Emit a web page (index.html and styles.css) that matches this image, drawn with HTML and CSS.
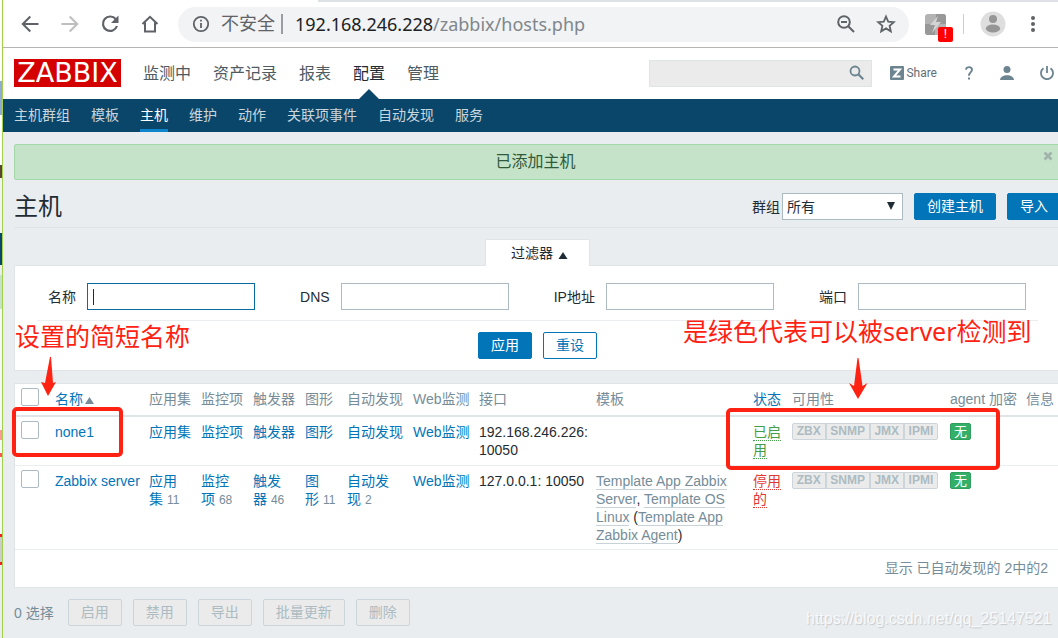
FILE: index.html
```html
<!DOCTYPE html>
<html lang="zh-CN">
<head>
<meta charset="utf-8">
<title>Zabbix - 主机</title>
<link rel="stylesheet" href="styles.css">
</head>
<body>
<div class="backdrop"></div>
<div class="window">
  <div class="toolbar">
    <button class="tool" aria-label="后退"><svg width="20" height="20" viewBox="0 0 20 20"><path d="M18.500 10H3M10.300 2.500 2.800 10l7.500 7.500" fill="none" stroke="#5f6368" stroke-width="2"/></svg></button>
    <button class="tool" aria-label="前进"><svg width="20" height="20" viewBox="0 0 20 20"><path d="M1.500 10H17M9.700 2.500 17.200 10l-7.500 7.500" fill="none" stroke="#bcbec0" stroke-width="2"/></svg></button>
    <button class="tool" aria-label="刷新"><svg width="20" height="20" viewBox="0 0 20 20"><path d="M15.800 5.200A7.200 7.200 0 1 0 17 12" fill="none" stroke="#5f6368" stroke-width="2.200"/><path d="M18.500 1.500v7.500H11z" fill="#5f6368"/></svg></button>
    <button class="tool" aria-label="主页"><svg width="20" height="20" viewBox="0 0 20 20"><path d="M2.500 10 10 2.800 17.500 10M5 8.500v9h10v-9" fill="none" stroke="#5f6368" stroke-width="2"/></svg></button>
    <div class="address">
      <svg width="18" height="18" viewBox="0 0 18 18"><circle cx="9" cy="9" r="7.200" fill="none" stroke="#5f6368" stroke-width="1.800"/><path d="M9 8v5M9 4.800v1.800" stroke="#5f6368" stroke-width="1.800"/></svg>
      <span class="insecure">不安全</span>
      <span class="address-rule"></span>
      <span class="url">192.168.246.228<span class="url-path">/zabbix/hosts.php</span></span>
      <button class="tool" aria-label="缩放"><svg width="20" height="20" viewBox="0 0 20 20"><circle cx="8" cy="8" r="5.800" fill="none" stroke="#5f6368" stroke-width="2"/><path d="M5 8h6M12.200 12.200l5.800 5.800" stroke="#5f6368" stroke-width="2" fill="none"/></svg></button>
      <button class="tool" aria-label="收藏"><svg width="20" height="20" viewBox="0 0 20 20"><path d="M10 2.500l2.200 5.100 5.600.5-4.200 3.700 1.200 5.500-4.800-2.900-4.800 2.900 1.200-5.500L2.200 8.100l5.600-.5z" fill="none" stroke="#5f6368" stroke-width="1.800"/></svg></button>
    </div>
    <button class="extension" aria-label="扩展程序">
      <svg width="21" height="21" viewBox="0 0 21 21"><rect width="21" height="21" rx="3" fill="#b3b3b3"/><path d="M0 10h10v11H3a3 3 0 0 1-3-3zM11 0h7a3 3 0 0 1 3 3v7H11z" fill="#989898"/><path d="M13 2 5 11h5l-3 8 9-11h-5z" fill="#d4d4d4"/></svg>
      <span class="alert-badge">!</span>
    </button>
    <span class="tool-rule"></span>
    <button class="profile" aria-label="用户"><svg width="26" height="26" viewBox="0 0 26 26"><circle cx="13" cy="13" r="12.500" fill="#dedede"/><circle cx="13" cy="8" r="4" fill="#969696"/><ellipse cx="13" cy="17.500" rx="7.200" ry="4" fill="#969696"/></svg></button>
    <button class="more" aria-label="更多"><svg width="6" height="18" viewBox="0 0 6 18"><circle cx="3" cy="3" r="2" fill="#5f6368"/><circle cx="3" cy="9" r="2" fill="#5f6368"/><circle cx="3" cy="15" r="2" fill="#5f6368"/></svg></button>
  </div>

  <header class="header">
    <a class="logo" href="#">ZABBIX</a>
    <nav class="menu">
      <a href="#">监测中</a><a href="#">资产记录</a><a href="#">报表</a><a class="current" href="#">配置</a><a href="#">管理</a>
    </nav>
    <form class="search">
      <input class="search-input" type="text" aria-label="搜索">
      <button class="search-button" type="button" aria-label="搜索"><svg width="16" height="16" viewBox="0 0 16 16"><circle cx="6" cy="6" r="4.500" fill="none" stroke="#6c8490" stroke-width="1.800"/><path d="M9.300 9.300l5 5" stroke="#6c8490" stroke-width="2.200"/></svg></button>
    </form>
    <a class="share" href="#"><svg width="14" height="14" viewBox="0 0 14 14"><rect width="14" height="14" rx="1" fill="#6c8490"/><path d="M3.500 3.500h6.500l-6 7h6.500" fill="none" stroke="#fff" stroke-width="2"/></svg>Share</a>
    <a class="help" href="#" aria-label="帮助"><svg width="8" height="14" viewBox="0 0 8 14"><path d="M1 3.800C1 .2 7 .2 7 3.800 7 6.200 4 6.300 4 9.800" fill="none" stroke="#6c8490" stroke-width="1.900"/><path d="M3 11.500h2v2H3z" fill="#6c8490"/></svg></a>
    <a class="user" href="#" aria-label="用户"><svg width="14" height="14" viewBox="0 0 14 14"><circle cx="7" cy="3.500" r="3.500" fill="#6c8490"/><path d="M0 14c0-6.500 14-6.500 14 0z" fill="#6c8490"/></svg></a>
    <a class="power" href="#" aria-label="退出"><svg width="14" height="14" viewBox="0 0 14 14"><path d="M3.500 2.300a6 6 0 1 0 7 0M7 0v7" fill="none" stroke="#6c8490" stroke-width="1.800"/></svg></a>
  </header>
  <nav class="submenu">
    <a href="#">主机群组</a><a href="#">模板</a><a class="current" href="#">主机</a><a href="#">维护</a><a href="#">动作</a><a href="#">关联项事件</a><a href="#">自动发现</a><a href="#">服务</a>
  </nav>

  <main class="content">
    <div class="message">已添加主机<button class="message-close" aria-label="关闭"><svg width="10" height="10" viewBox="0 0 10 10"><path d="M1.500 1.500l7 7M8.500 1.500l-7 7" stroke="#a2b3ad" stroke-width="2.600"/></svg></button></div>
    <div class="title-row">
      <h1>主机</h1>
      <label for="group">群组</label>
      <span class="select"><select id="group"><option>所有</option></select><svg width="8" height="8" viewBox="0 0 8 8"><path d="M0 0h8L4 8z" fill="#1f2c33"/></svg></span>
      <button class="btn primary">创建主机</button>
      <button class="btn primary">导入</button>
    </div>
    <button class="filter-tab">过滤器<svg width="10" height="7" viewBox="0 0 10 7"><path d="M5 0l4.500 7h-9z" fill="#1f2c33"/></svg></button>
    <form class="filter">
      <div class="fields">
        <div class="field"><label for="name">名称</label><input id="name" class="active" type="text"></div>
        <div class="field"><label for="dns">DNS</label><input id="dns" type="text"></div>
        <div class="field"><label for="ip">IP地址</label><input id="ip" type="text"></div>
        <div class="field"><label for="port">端口</label><input id="port" type="text"></div>
      </div>
      <div class="filter-actions">
        <button class="btn primary" type="button">应用</button>
        <button class="btn outline" type="button">重设</button>
      </div>
    </form>

    <div class="hosts">
      <table>
        <colgroup><col class="c-check"><col class="c-name"><col class="c-three"><col class="c-three"><col class="c-three"><col class="c-graph"><col class="c-four"><col class="c-four"><col class="c-interface"><col><col class="c-status"><col class="c-available"><col class="c-agent"><col class="c-info"></colgroup>
        <thead>
          <tr><th><input type="checkbox" aria-label="全选"></th><th><a href="#">名称<svg class="sort" width="9" height="7" viewBox="0 0 9 7"><path d="M4.500 0 9 7H0z" fill="#768d99"/></svg></a></th><th>应用集</th><th>监控项</th><th>触发器</th><th>图形</th><th>自动发现</th><th>Web监测</th><th>接口</th><th>模板</th><th><a href="#">状态</a></th><th>可用性</th><th>agent 加密</th><th>信息</th></tr>
        </thead>
        <tbody>
          <tr>
            <td><input type="checkbox" aria-label="none1"></td>
            <td><a href="#">none1</a></td>
            <td><a href="#">应用集</a></td><td><a href="#">监控项</a></td><td><a href="#">触发器</a></td><td><a href="#">图形</a></td><td><a href="#">自动发现</a></td><td><a href="#">Web监测</a></td>
            <td>192.168.246.226: 10050</td><td></td>
            <td><a class="status on" href="#">已启用</a></td>
            <td><div class="badges"><span>ZBX</span><span>SNMP</span><span>JMX</span><span>IPMI</span></div></td>
            <td><span class="encryption">无</span></td><td></td>
          </tr>
          <tr>
            <td><input type="checkbox" aria-label="Zabbix server"></td>
            <td><a href="#">Zabbix server</a></td>
            <td><a href="#">应用集</a>&nbsp;<small>11</small></td><td><a href="#">监控项</a>&nbsp;<small>68</small></td><td><a href="#">触发器</a>&nbsp;<small>46</small></td><td><a href="#">图形</a>&nbsp;<small>11</small></td><td><a href="#">自动发现</a>&nbsp;<small>2</small></td><td><a href="#">Web监测</a></td>
            <td>127.0.0.1: 10050</td>
            <td><a class="template" href="#">Template App Zabbix Server</a>, <a class="template" href="#">Template OS Linux</a> (<a class="template" href="#">Template App Zabbix Agent</a>)</td>
            <td><a class="status off" href="#">停用的</a></td>
            <td><div class="badges"><span>ZBX</span><span>SNMP</span><span>JMX</span><span>IPMI</span></div></td>
            <td><span class="encryption">无</span></td><td></td>
          </tr>
        </tbody>
      </table>
      <div class="summary">显示 已自动发现的 2中的2</div>
    </div>
    <div class="bulk">
      <span class="selected">0 选择</span>
      <button class="btn" disabled>启用</button><button class="btn" disabled>禁用</button><button class="btn" disabled>导出</button><button class="btn" disabled>批量更新</button><button class="btn" disabled>删除</button>
    </div>
  </main>
</div>

<div class="note note-name">设置的简短名称</div>
<div class="note note-status">是绿色代表可以被server检测到</div>
<svg class="arrow arrow-name" width="16" height="40" viewBox="0 0 16 40"><path d="M10 0h1l2 26 3-1-8 14-7-14 4 1z" fill="#ff2112"/></svg>
<svg class="arrow arrow-status" width="20" height="42" viewBox="0 0 20 42"><path d="M9.500 0h1l4 28 5-3-9.500 16L1 25l5 3z" fill="#ff2112"/></svg>
<div class="frame frame-name"></div>
<div class="frame frame-status"></div>
<div class="watermark">https://blog.csdn.net/qq_25147521</div>
</body>
</html>
```
FILE: styles.css
```css
* { box-sizing: border-box; }
body {
  margin: 0;
  position: relative;
  display: flex;
  min-height: 100vh;
  overflow: hidden;
  background: #e9edf0;
  color: #1f2c33;
  font: 14px/18px "Liberation Sans", "Noto Sans CJK SC", sans-serif;
}
a { color: #0275b8; text-decoration: none; }
button, input, select { font: inherit; color: inherit; margin: 0; }
button { border: 0; padding: 0; background: none; white-space: nowrap; }
svg { display: block; flex: none; }

.backdrop {
  flex: none;
  width: 2px;
  background: linear-gradient(#fff 81px, #91abd6 81px 115px, #fff 115px 165px, #584632 165px 178px, #f1f2f4 178px 233px, #0a466a 233px 265px, #e9edf0 265px 275px, #c5e3c8 275px 309px, #f4f6f7 309px 430px, #f99 430px 440px, #f4f6f7 440px 453px, #f55 453px 457px, #f4f6f7 457px 534px, #e22 534px 537px, #ccc 537px 562px, #e22 562px 565px, #e9edf0 565px);
}
.window { flex: 1; min-width: 0; border-left: 1px solid #a3d14b; }

/* browser toolbar */
.toolbar {
  display: flex;
  align-items: center;
  height: 48px;
  padding: 1px 22px 0 17px;
  border-bottom: 1px solid #b4b4b4;
  background: linear-gradient(#dee1e6, #dee1e6) 315px 0 / 100% 2px no-repeat #fff;
}
.toolbar > .tool { margin-right: 20px; }
.address {
  flex: 1;
  display: flex;
  align-items: center;
  height: 35px;
  margin-right: 16px;
  padding: 0 13px 0 14px;
  border-radius: 18px;
  background: #f1f3f4;
}
.toolbar > .tool + .address { margin-left: -2px; }
.insecure { margin-left: 11px; color: #5f6368; font-size: 18px; line-height: 24px; }
.address-rule { width: 2px; height: 20px; margin: 0 12px 0 6px; background: #9a9da1; }
.url { flex: 1; color: #202124; font: 18px/24px "Noto Sans", sans-serif; }
.url-path { color: #80868b; }
.address .tool + .tool { margin-left: 20px; }
.extension { position: relative; }
.alert-badge {
  position: absolute;
  top: 13px;
  left: 13px;
  width: 15px;
  height: 15px;
  border-radius: 2px;
  background: #f00;
  color: #fff;
  font-size: 12px;
  line-height: 15px;
}
.tool-rule { width: 1px; height: 20px; margin: 0 16px 0 17px; background: #ccc; }
.more { margin-left: 24px; }

/* application header */
.header { display: flex; align-items: center; height: 51px; padding: 0 4px 1px 11px; background: #fff; }
.logo {
  width: 107px;
  height: 28px;
  background: #d40000;
  color: #fff;
  font: 27px/28px "DejaVu Sans", sans-serif;
  text-align: center;
}
.menu { flex: 1; display: flex; gap: 22px; margin-left: 22px; }
.menu a { position: relative; color: #4f5b61; font-size: 16px; line-height: 49px; }
.menu .current { color: #1f2c33; }
.menu .current::after {
  content: "";
  position: absolute;
  left: 50%;
  bottom: -1px;
  margin-left: -10px;
  border: 10px solid transparent;
  border-top: 0;
  border-bottom-color: #0a466a;
}
.search { display: flex; align-items: center; width: 223px; height: 27px; padding-right: 6px; border: 1px solid #dfe4e7; background: #ebebeb; }
.search-input { flex: 1; min-width: 0; height: 25px; border: 0; padding: 0 6px; background: transparent; }
.share { display: flex; align-items: center; gap: 2px; margin-left: 18px; color: #5f6f78; font: 12px/16px Roboto, sans-serif; }
.help { margin-left: 28px; }
.user { margin-left: 27px; }
.power { margin-left: 26px; }

.submenu { display: flex; gap: 21px; height: 33px; padding-left: 11px; background: #0a466a; }
.submenu a { color: #c8d6de; line-height: 33px; }
.submenu .current { color: #fff; box-shadow: inset 0 -3px #0d84cc; }

/* page */
.content { margin-right: -3px; padding: 12px 0 0 11px; }
.message {
  position: relative;
  height: 36px;
  padding-right: 4px;
  border: 1px solid #a3d7a7;
  border-radius: 2px;
  background: #c5e3c8;
  color: #2f5a3c;
  font-size: 16px;
  line-height: 33px;
  text-align: center;
}
.message-close { position: absolute; top: 6px; right: 7px; }
.title-row { display: flex; align-items: center; height: 48px; padding-top: 5px; border-bottom: 1px solid #dfe4e7; }
h1 { flex: 1; margin: 0; padding-top: 2px; font-size: 24px; font-weight: 400; line-height: 40px; }
.title-row label { margin-right: 2px; padding-top: 2px; }
.select { position: relative; width: 121px; margin-right: 11px; }
.select select { display: block; width: 100%; height: 27px; padding: 2px 4px 0; border: 1px solid #acbbc2; border-radius: 0; background: #fff; appearance: none; }
.select svg { position: absolute; top: 9px; right: 8px; pointer-events: none; }
.btn { height: 27px; padding: 0 12px; border: 1px solid #0275b8; border-radius: 2px; line-height: 25px; }
.primary { background: #0275b8; color: #fff; }
.outline { background: #fff; color: #0275b8; }
.title-row .btn + .btn { margin-left: 11px; }

.filter-tab {
  position: relative;
  display: flex;
  align-items: center;
  gap: 5px;
  height: 27px;
  margin: 11px auto -1px 471px;
  padding: 0 21px 0 25px;
  border: 1px solid #dfe4e7;
  border-bottom: 0;
  border-radius: 2px 2px 0 0;
  background: #fff;
}
.filter-tab svg { margin-top: 5px; }
.filter { padding: 17px 22px 11px; border: 1px solid #dfe4e7; background: #fff; }
.fields { display: flex; justify-content: space-between; padding: 0 12px 10px 11px; border-bottom: 1px solid #ebeef0; }
.field { display: flex; align-items: center; gap: 11px; }
.field input { width: 168px; height: 27px; border: 1px solid #acbbc2; padding: 0 5px; background: #fff; }
.field .active { border-color: #0a6ba1; background: linear-gradient(#1f2c33, #1f2c33) 5px 5px / 1px 16px no-repeat #fff; }
.filter-actions { display: flex; justify-content: center; gap: 11px; padding-top: 11px; }

/* host table */
.hosts { margin-top: 12px; border: 1px solid #dfe4e7; background: #fff; }
table { width: 100%; table-layout: fixed; border-collapse: separate; border-spacing: 0; }
.c-check { width: 34px; }
.c-name { width: 94px; }
.c-three { width: 52px; }
.c-graph { width: 42px; }
.c-four { width: 66px; }
.c-interface { width: 117px; }
.c-status { width: 39px; }
.c-available { width: 158px; }
.c-agent { width: 76px; }
.c-info { width: 40px; }
th, td { padding: 6px 0 5px 6px; text-align: left; vertical-align: top; }
th { height: 33px; border-bottom: 2px solid #dfe4e7; color: #768d99; font-weight: 400; white-space: nowrap; }
td { border-bottom: 1px solid #ebeef0; }
tbody tr:first-child td { height: 49px; }
tbody tr:last-child td { height: 84px; }
th:first-child, td:first-child { padding-top: 4px; }
input[type="checkbox"] { display: block; width: 18px; height: 18px; border: 1px solid #acbbc2; border-radius: 2px; background: #fff; appearance: none; }
.sort { display: inline-block; margin-left: 2px; }
small { color: #768d99; font-size: 12px; }
.status { border-bottom: 1px dotted; }
.on { color: #429e47; }
.off { color: #e33734; }
.template { color: #768d99; border-bottom: 1px solid #c8d3d8; }
.badges { display: flex; width: 146px; height: 17px; border: 1px solid #ccd5d9; border-radius: 2px; background: #ebebeb; color: #acbbc2; font-size: 12px; font-weight: 700; line-height: 15px; }
.badges span { flex: auto; text-align: center; }
.badges span + span { border-left: 2px solid #ccd5d9; }
.encryption { display: block; width: 21px; height: 17px; border: 1px solid #2f9f5e; border-radius: 2px; background: #34af67; color: #fff; font-size: 13px; line-height: 15px; text-align: center; }
.summary { height: 37px; padding-right: 12px; color: #768d99; line-height: 36px; text-align: right; }
.bulk { display: flex; align-items: center; gap: 11px; padding-top: 11px; color: #768d99; }
.selected { margin-right: 3px; }
.btn:disabled { border-color: #ccd5d9; background: #ebebeb; color: #acbbc2; }

/* annotations over the page */
.note { position: absolute; color: #ff2112; font: 25px/34px "Noto Sans", "Noto Sans CJK SC", sans-serif; white-space: nowrap; }
.note-name { left: 15px; top: 319px; }
.note-status { left: 683px; top: 314px; }
.arrow { position: absolute; }
.arrow-name { left: 40px; top: 357px; }
.arrow-status { left: 848px; top: 358px; }
.frame { position: absolute; border: 4px solid #ff2112; border-radius: 5px; }
.frame-name { left: 12px; top: 407px; width: 111px; height: 50px; }
.frame-status { left: 726px; top: 408px; width: 274px; height: 62px; }
.watermark { position: absolute; left: 806px; top: 610px; color: #f8f9fa; font-size: 16px; text-shadow: 1px 1px 1px #c4c8ca; }
```
